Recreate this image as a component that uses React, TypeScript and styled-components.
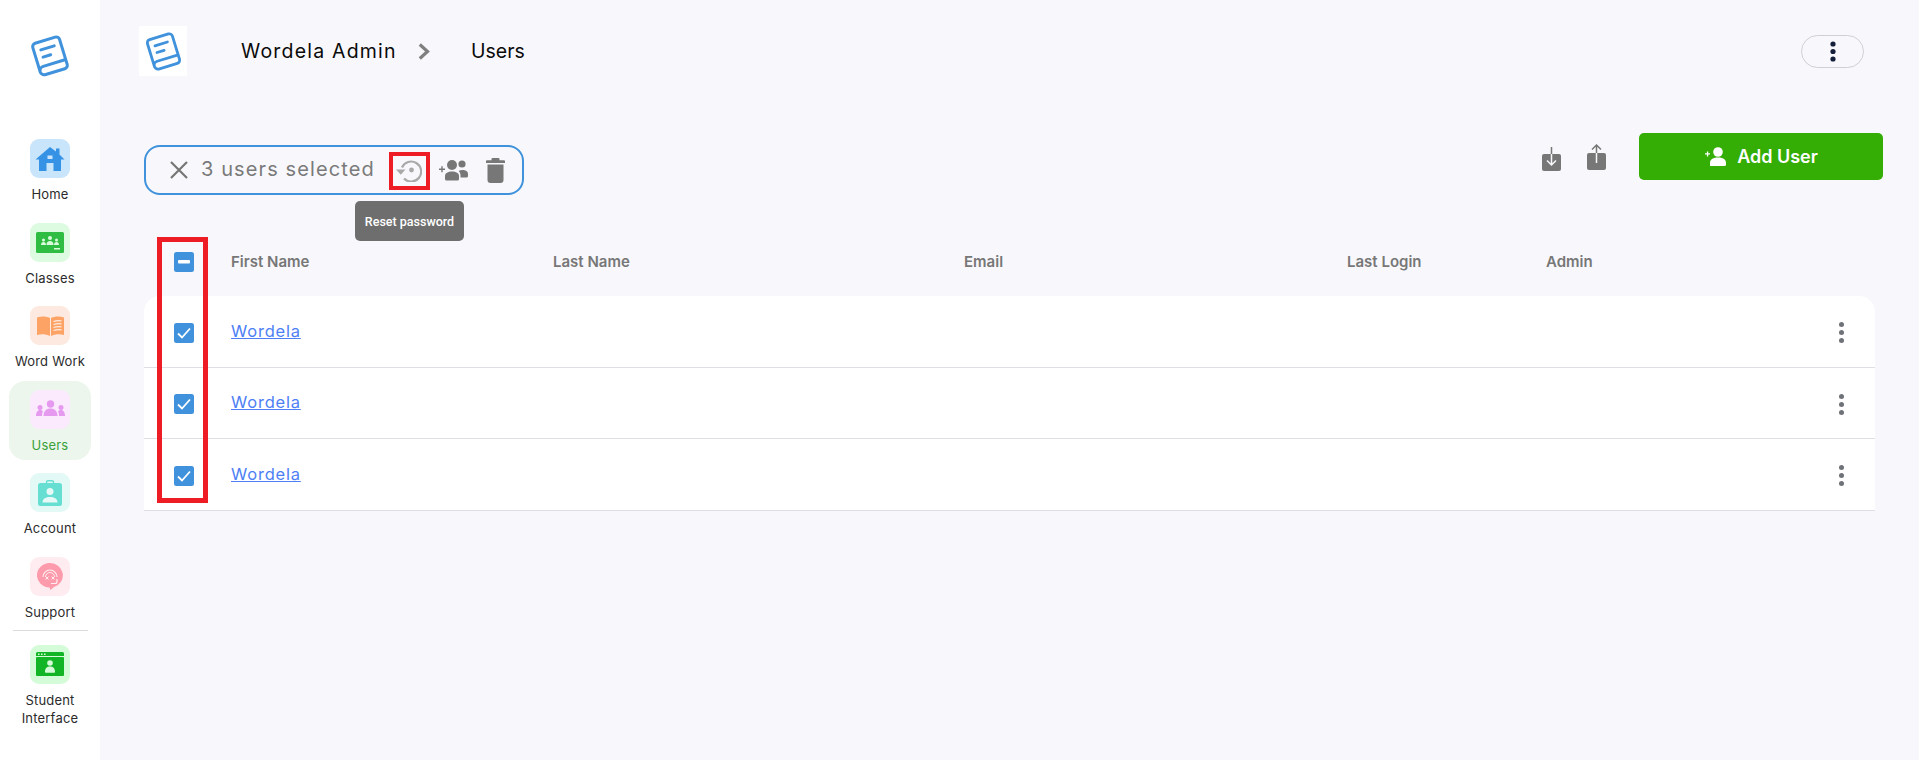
import React from "react";
import styled, { createGlobalStyle } from "styled-components";

const Global = createGlobalStyle`
  html, body { margin: 0; padding: 0; background: #f8f8fc; }
  body { font-family: Inter, "Liberation Sans", sans-serif; }
  * { box-sizing: border-box; }
`;

const Page = styled.div`
  display: flex;
  width: 1919px;
  height: 760px;
  overflow: hidden;
  background: #f8f8fc;
`;

const Sidebar = styled.aside`
  width: 100px;
  flex: none;
  background: #fff;
  display: flex;
  flex-direction: column;
  align-items: center;
  padding-top: 34px;
`;

const SideLogo = styled.div`
  height: 96px;
  display: flex;
  justify-content: center;
  width: 100%;
`;

const NavList = styled.nav`
  display: flex;
  flex-direction: column;
  align-items: center;
  gap: 4.5px;
  width: 100%;
`;

const NavItem = styled.div<{ $active?: boolean }>`
  width: 82px;
  height: 79px;
  border-radius: 16px;
  padding-top: 9px;
  display: flex;
  flex-direction: column;
  align-items: center;
  background: ${(p) => (p.$active ? "#ecf6ec" : "transparent")};
`;

const NavIcon = styled.div<{ $bg: string }>`
  width: 40px;
  height: 39px;
  border-radius: 9px;
  background: ${(p) => p.$bg};
  display: flex;
  align-items: center;
  justify-content: center;
  flex: none;
`;

const NavLabel = styled.div<{ $active?: boolean }>`
  margin-top: 7px;
  font-size: 13px;
  line-height: 18px;
  text-align: center;
  letter-spacing: 0.2px;
  white-space: nowrap;
  color: ${(p) => (p.$active ? "#3aa13a" : "#2b2b2b")};
`;

const SideDivider = styled.div`
  width: 75px;
  height: 1px;
  flex: none;
  background: #dcdcdc;
  margin: -1.5px 0 0.5px;
`;

const Main = styled.main`
  flex: 1;
  min-width: 0;
  padding: 26px 36px 0 39px;
  display: flex;
  flex-direction: column;
`;

const Header = styled.header`
  display: flex;
  align-items: center;
  height: 50px;
`;

const HeaderLogo = styled.div`
  width: 48px;
  height: 50px;
  background: #fff;
  display: flex;
  align-items: center;
  justify-content: center;
`;

const Crumb = styled.div`
  font-size: 19.5px;
  color: #0a0a0a;
`;

const CrumbRoot = styled(Crumb)`
  margin-left: 54px;
  width: 170px;
  letter-spacing: 1.2px;
  white-space: nowrap;
`;

const CrumbSep = styled.div`
  width: 53px;
  margin-left: 7px;
  display: flex;
`;

const MenuPill = styled.button`
  margin-left: auto;
  margin-right: 19px;
  width: 63px;
  height: 33px;
  background: transparent;
  border: 1.5px solid #cfcfd6;
  border-radius: 17px;
  padding: 0;
  display: flex;
  align-items: center;
  justify-content: center;
`;

const ActionsRow = styled.div`
  display: flex;
  align-items: flex-start;
  padding-left: 5px;
  margin-top: 57px;
  height: 106px;
`;

const SelectionBar = styled.div`
  margin-top: 12px;
  width: 380px;
  height: 50px;
  border: 2px solid #3f92db;
  border-radius: 16px;
  display: flex;
  align-items: center;
  padding-left: 24px;
`;

const SelectedText = styled.span`
  margin-left: 13px;
  margin-top: -2px;
  width: 185px;
  font-size: 20px;
  letter-spacing: 1.1px;
  color: #7a7a7a;
  white-space: nowrap;
`;

const IconSlot = styled.div<{ $w: number; $ml: number }>`
  position: relative;
  flex: none;
  width: ${(p) => p.$w}px;
  margin-left: ${(p) => p.$ml}px;
  display: flex;
  justify-content: center;
  align-items: center;
`;

const RedBox = styled.div`
  position: absolute;
  left: -7px;
  top: -6px;
  width: 41px;
  height: 38px;
  border: 4px solid #ee1c25;
`;

const Tooltip = styled.div`
  position: absolute;
  left: -41px;
  top: 43px;
  width: 109px;
  height: 40px;
  border-radius: 5px;
  background: #6e6e6e;
  color: #fff;
  font-family: Roboto, sans-serif;
  font-size: 12.5px;
  font-weight: 500;
  display: flex;
  align-items: center;
  justify-content: center;
`;

const RightActions = styled.div`
  margin-left: auto;
  display: flex;
  align-items: flex-start;
`;

const ExportIcon = styled.div<{ $ml: number; $mt: number }>`
  margin-left: ${(p) => p.$ml}px;
  margin-top: ${(p) => p.$mt}px;
  display: flex;
`;

const AddButton = styled.button`
  margin-left: 33px;
  width: 244px;
  height: 47px;
  background: #34ad05;
  border: none;
  border-radius: 5px;
  color: #fff;
  font-family: inherit;
  font-size: 18px;
  font-weight: 600;
  display: flex;
  align-items: center;
  justify-content: center;
  gap: 11px;
  padding: 0 0 0 1px;
`;

const TableWrap = styled.div`
  position: relative;
  margin: 0 8px 0 5px;
`;

const ColumnHighlight = styled.div`
  position: absolute;
  left: 13px;
  top: -2px;
  width: 51px;
  height: 266px;
  border: 5px solid #ee1c25;
  z-index: 2;
`;

const Grid = `
  display: grid;
  grid-template-columns: 87px 322px 411px 383px 199px 1fr;
  align-items: center;
`;

const HeadRow = styled.div`
  ${Grid}
  height: 57px;
  padding-bottom: 11px;
  font-size: 15px;
  font-weight: 600;
  color: #777;
`;

const HeadCell = styled.div`
  margin-top: -2px;
`;

const Body = styled.div`
  background: #fff;
  border-radius: 16px 16px 0 0;
  overflow: hidden;
`;

const Row = styled.div<{ $h: number }>`
  ${Grid}
  height: ${(p) => p.$h}px;
  padding-top: 2px;
  border-bottom: 1.5px solid #dfdfe5;
`;

const CheckCell = styled.div`
  padding-left: 30px;
  display: flex;
`;

const CheckBox = styled.div`
  width: 20px;
  height: 20px;
  border-radius: 2.5px;
  background: #3f92db;
  display: flex;
  align-items: center;
  justify-content: center;
`;

const NameLink = styled.a`
  color: #4f7ff5;
  font-size: 16.5px;
  letter-spacing: 0.8px;
  text-decoration: underline;
  margin-top: -4px;
  justify-self: start;
`;

const Kebab = styled.div`
  grid-column: 6;
  justify-self: end;
  margin-right: 31px;
  display: flex;
  flex-direction: column;
  gap: 3px;
`;

const Dot = styled.span`
  width: 5px;
  height: 5px;
  border-radius: 50%;
  background: #6f7278;
  display: block;
`;

const BookLogo = ({ size }: { size: number }) => (
  <svg width={size} height={size} viewBox="0 0 44 44" fill="none" stroke="#3f92db" strokeWidth="3" strokeLinecap="round" strokeLinejoin="round">
    <g transform="rotate(-17 22 22)">
      <path d="M8 35V9a3.500 3.500 0 0 1 3.500-3.500h21A3.500 3.500 0 0 1 36 9v26a3.500 3.500 0 0 1-3.500 3.500h-20A4.500 4.500 0 0 1 8 34.500 4.500 4.500 0 0 1 12.500 30H36" />
      <path d="M15 13.500h14M15 21h8" />
    </g>
  </svg>
);

const HomeIcon = () => (
  <svg width="30" height="26" viewBox="0 0 30 26" fill="#3592e4">
    <path d="M15 1 21 5.500V2.500h3.500v6L29.500 13.500H26V25h-7.500v-8h-7v8H4V13.500H.5z" />
    <rect x="12.500" y="9.500" width="5" height="3.500" fill="#cbe6fc" />
  </svg>
);

const ClassesIcon = () => (
  <svg width="28" height="21" viewBox="0 0 28 21">
    <rect width="28" height="21" rx="1.500" fill="#2fbc42" />
    <g fill="#d9fbdc">
      <circle cx="14" cy="6" r="2" />
      <path d="M10.500 13c0-3 1.500-4 3.500-4s3.500 1 3.500 4z" />
      <circle cx="7.500" cy="8" r="1.500" />
      <path d="M5 13c0-2 1-3 2.500-3S10 11 10 13z" />
      <circle cx="20.500" cy="8" r="1.500" />
      <path d="M18 13c0-2 1-3 2.500-3S23 11 23 13z" />
      <rect x="18" y="16" width="6" height="1.500" />
    </g>
  </svg>
);

const BookOpenIcon = () => (
  <svg width="27" height="20" viewBox="0 0 27 20">
    <path d="M0 1.500C4 0 9 0 13 2v18C9 18 4 18 0 19z" fill="#fda365" />
    <path d="M14 2c4-2 9-2 13-.5V19c-4-1-9-1-13 1z" fill="#fda365" />
    <path d="M16.500 5.500c2.500-1 5-1 8-.7M16.500 8.500c2.500-1 5-1 8-.7M16.500 11.500c2.500-1 5-1 8-.7M16.500 14.500c2.500-1 5-1 8-.7" fill="none" stroke="#fdeadf" strokeWidth="1.200" />
  </svg>
);

const UsersIcon = () => (
  <svg width="29" height="18" viewBox="0 0 29 18" fill="#e59af0">
    <circle cx="14.500" cy="4" r="3.700" />
    <path d="M7.500 16c0-5 3-7.500 7-7.500s7 2.500 7 7.500z" />
    <circle cx="4" cy="7.500" r="2.500" />
    <path d="M0 16c0-3.500 1.500-6 4-6 1.500 0 2.300.5 3 1.500C6 13 6 14.500 6 16z" />
    <circle cx="25" cy="7.500" r="2.500" />
    <path d="M29 16c0-3.500-1.500-6-4-6-1.500 0-2.300.5-3 1.500 1 1.500 1 3 1 4.500z" />
  </svg>
);

const AccountIcon = () => (
  <svg width="24" height="26" viewBox="0 0 24 26">
    <rect x="0" y="3" width="24" height="23" rx="2.500" fill="#66dfd2" />
    <rect x="8.500" y="0.800" width="7" height="4.500" rx="1.500" fill="none" stroke="#66dfd2" strokeWidth="1.500" />
    <circle cx="12" cy="11.500" r="3.500" fill="#e6f9f7" />
    <path d="M4.500 22.500c0-4 3.500-5.500 7.500-5.500s7.500 1.500 7.500 5.500z" fill="#e6f9f7" />
  </svg>
);

const SupportIcon = () => (
  <svg width="26" height="27" viewBox="0 0 26 27">
    <path d="M13 0a12.800 12.300 0 0 1 4 24l-3.500 3-1-2.400A12.800 12.300 0 0 1 13 0z" fill="#fd9aab" />
    <path d="M6 14a7 7 0 0 1 14 0" fill="none" stroke="#ffeef0" strokeWidth="1.200" />
    <path d="M8.500 14a4.500 4.500 0 0 1 9 0" fill="none" stroke="#ffeef0" strokeWidth="1" />
    <path d="M8.500 13.500l3 3M11.500 13.500l-3 3M14.500 13.500l3 3M17.500 13.500l-3 3" stroke="#ffeef0" strokeWidth="1" />
    <path d="M20 16v2.500a2 2 0 0 1-2 2h-4" fill="none" stroke="#ffeef0" strokeWidth="1.200" />
  </svg>
);

const StudentIcon = () => (
  <svg width="28" height="24" viewBox="0 0 28 24">
    <path d="M1.500 0h25A1.500 1.500 0 0 1 28 1.500V4H0V1.500A1.500 1.500 0 0 1 1.500 0z" fill="#12b526" />
    <rect x="0" y="5" width="28" height="19" rx="1" fill="#12b526" />
    <g fill="#d6fbd9">
      <rect x="2" y="1.500" width="1.500" height="1.500" />
      <rect x="5" y="1.500" width="1.500" height="1.500" />
      <rect x="8" y="1.500" width="1.500" height="1.500" />
      <circle cx="14" cy="11" r="2.800" />
      <path d="M9 20c0-4 2-5.500 5-5.500s5 1.500 5 5.500a.8.8 0 0 1-.8.8H9.800A.8.8 0 0 1 9 20z" />
    </g>
  </svg>
);

const ChevronIcon = () => (
  <svg width="12" height="17" viewBox="0 0 12 17" fill="none" stroke="#7f7f7f" strokeWidth="3.200">
    <path d="M1.800 1.500 9.500 8.500 1.800 15.500" />
  </svg>
);

const CloseIcon = () => (
  <svg width="18" height="18" viewBox="0 0 18 18" stroke="#757575" strokeWidth="2.200" fill="none">
    <path d="M1 1l16 16M17 1 1 17" />
  </svg>
);

const ResetIcon = () => (
  <svg width="26" height="24" viewBox="0 0 26 24">
    <path d="M6 9.500A10 10 0 1 1 8 20.500" fill="none" stroke="#a9a9a9" strokeWidth="2.200" />
    <path d="M0 11.500h9.500l-4.700 5.300z" fill="#a9a9a9" />
    <circle cx="15.500" cy="12" r="2.400" fill="#a9a9a9" />
  </svg>
);

const GroupPlusIcon = () => (
  <svg width="29" height="23" viewBox="0 0 29 23" fill="#777">
    <path d="M0 9.500h6v1.400H0zM2.300 7.200h1.400v6H2.300z" />
    <circle cx="13" cy="6" r="5" />
    <path d="M6 20v-3c0-3 3-4.500 7-4.500s7 1.500 7 4.500v3a1.500 1.500 0 0 1-1.500 1.500h-11A1.500 1.500 0 0 1 6 20z" />
    <circle cx="23" cy="5" r="3.600" />
    <path d="M21.500 18.500h6a1.500 1.500 0 0 0 1.500-1.500v-2c0-3-2.500-4-5.500-4-1.500 0-2.800.3-3.800 1 1.300 1.300 1.800 3 1.800 4.500z" />
  </svg>
);

const TrashIcon = () => (
  <svg width="19" height="25" viewBox="0 0 19 25" fill="#777">
    <path d="M6.500 0h6a1 1 0 0 1 1 1v1.200h4.500a1 1 0 0 1 1 1V5H0V3.200a1 1 0 0 1 1-1h4.500V1a1 1 0 0 1 1-1z" />
    <path d="M1.500 6.500h16V22a3 3 0 0 1-3 3h-10a3 3 0 0 1-3-3z" />
  </svg>
);

const DownloadIcon = () => (
  <svg width="19" height="24" viewBox="0 0 19 24">
    <rect x="0" y="7" width="19" height="17" rx="2" fill="#777" />
    <path d="M9.500 0v7" stroke="#777" strokeWidth="1.500" />
    <path d="M9.500 7v11M5 13.500l4.500 4.500 4.500-4.500" stroke="#f8f8fc" strokeWidth="1.500" fill="none" />
  </svg>
);

const UploadIcon = () => (
  <svg width="19" height="26" viewBox="0 0 19 26">
    <rect x="0" y="9" width="19" height="17" rx="2" fill="#777" />
    <path d="M9.500 1v8M5 5.500 9.500 1 14 5.500" stroke="#777" strokeWidth="1.500" fill="none" />
    <path d="M9.500 9v10" stroke="#f8f8fc" strokeWidth="1.500" />
  </svg>
);

const AddUserIcon = () => (
  <svg width="21" height="19" viewBox="0 0 21 19" fill="#fff">
    <circle cx="13" cy="5" r="4.800" />
    <path d="M5 19v-3c0-4 3.500-5.500 8-5.500s8 1.500 8 5.500v1.500a1.500 1.500 0 0 1-1.500 1.500z" />
    <path d="M0 6.300h5v1.300H0zM1.900 4.500h1.300v5H1.900z" />
  </svg>
);

const CheckMark = () => (
  <svg width="14" height="12" viewBox="0 0 14 12" fill="none" stroke="#fff" strokeWidth="1.800">
    <path d="M1 6.500 5 10.500 13 1.500" />
  </svg>
);

const Minus = () => (
  <svg width="12" height="4" viewBox="0 0 12 4">
    <rect width="12" height="3.500" rx="1" fill="#fff" />
  </svg>
);

const TopDots = () => (
  <svg width="6" height="21" viewBox="0 0 6 21" fill="#14203a">
    <circle cx="3" cy="3" r="2.600" />
    <circle cx="3" cy="10.500" r="2.600" />
    <circle cx="3" cy="18" r="2.600" />
  </svg>
);

const nav = [
  { label: "Home", bg: "#c9e5fb", icon: <HomeIcon /> },
  { label: "Classes", bg: "#ddfbe0", icon: <ClassesIcon /> },
  { label: "Word Work", bg: "#fde9df", icon: <BookOpenIcon /> },
  { label: "Users", bg: "#fbeafd", icon: <UsersIcon />, active: true },
  { label: "Account", bg: "#e2f9f6", icon: <AccountIcon /> },
  { label: "Support", bg: "#ffecf0", icon: <SupportIcon /> },
];

const rows = [72, 71, 72];

export default function App() {
  return (
    <>
      <Global />
      <Page>
        <Sidebar>
          <SideLogo>
            <BookLogo size={44} />
          </SideLogo>
          <NavList>
            {nav.map((n) => (
              <NavItem key={n.label} $active={n.active}>
                <NavIcon $bg={n.bg}>{n.icon}</NavIcon>
                <NavLabel $active={n.active}>{n.label}</NavLabel>
              </NavItem>
            ))}
            <SideDivider />
            <NavItem>
              <NavIcon $bg="#d5fcd8">
                <StudentIcon />
              </NavIcon>
              <NavLabel>
                Student
                <br />
                Interface
              </NavLabel>
            </NavItem>
          </NavList>
        </Sidebar>
        <Main>
          <Header>
            <HeaderLogo>
              <BookLogo size={41} />
            </HeaderLogo>
            <CrumbRoot>Wordela Admin</CrumbRoot>
            <CrumbSep>
              <ChevronIcon />
            </CrumbSep>
            <Crumb>Users</Crumb>
            <MenuPill aria-label="More">
              <TopDots />
            </MenuPill>
          </Header>
          <ActionsRow>
            <SelectionBar>
              <CloseIcon />
              <SelectedText>3 users selected</SelectedText>
              <IconSlot $w={26} $ml={10}>
                <ResetIcon />
                <RedBox />
                <Tooltip>Reset password</Tooltip>
              </IconSlot>
              <IconSlot $w={29} $ml={17}>
                <GroupPlusIcon />
              </IconSlot>
              <IconSlot $w={19} $ml={18}>
                <TrashIcon />
              </IconSlot>
            </SelectionBar>
            <RightActions>
              <ExportIcon $ml={0} $mt={14}>
                <DownloadIcon />
              </ExportIcon>
              <ExportIcon $ml={26} $mt={11}>
                <UploadIcon />
              </ExportIcon>
              <AddButton>
                <AddUserIcon />
                Add User
              </AddButton>
            </RightActions>
          </ActionsRow>
          <TableWrap>
            <ColumnHighlight />
            <HeadRow>
              <CheckCell>
                <CheckBox>
                  <Minus />
                </CheckBox>
              </CheckCell>
              <HeadCell>First Name</HeadCell>
              <HeadCell>Last Name</HeadCell>
              <HeadCell>Email</HeadCell>
              <HeadCell>Last Login</HeadCell>
              <HeadCell>Admin</HeadCell>
            </HeadRow>
            <Body>
              {rows.map((h, i) => (
                <Row key={i} $h={h}>
                  <CheckCell>
                    <CheckBox>
                      <CheckMark />
                    </CheckBox>
                  </CheckCell>
                  <NameLink href="#">Wordela</NameLink>
                  <Kebab>
                    <Dot />
                    <Dot />
                    <Dot />
                  </Kebab>
                </Row>
              ))}
            </Body>
          </TableWrap>
        </Main>
      </Page>
    </>
  );
}
